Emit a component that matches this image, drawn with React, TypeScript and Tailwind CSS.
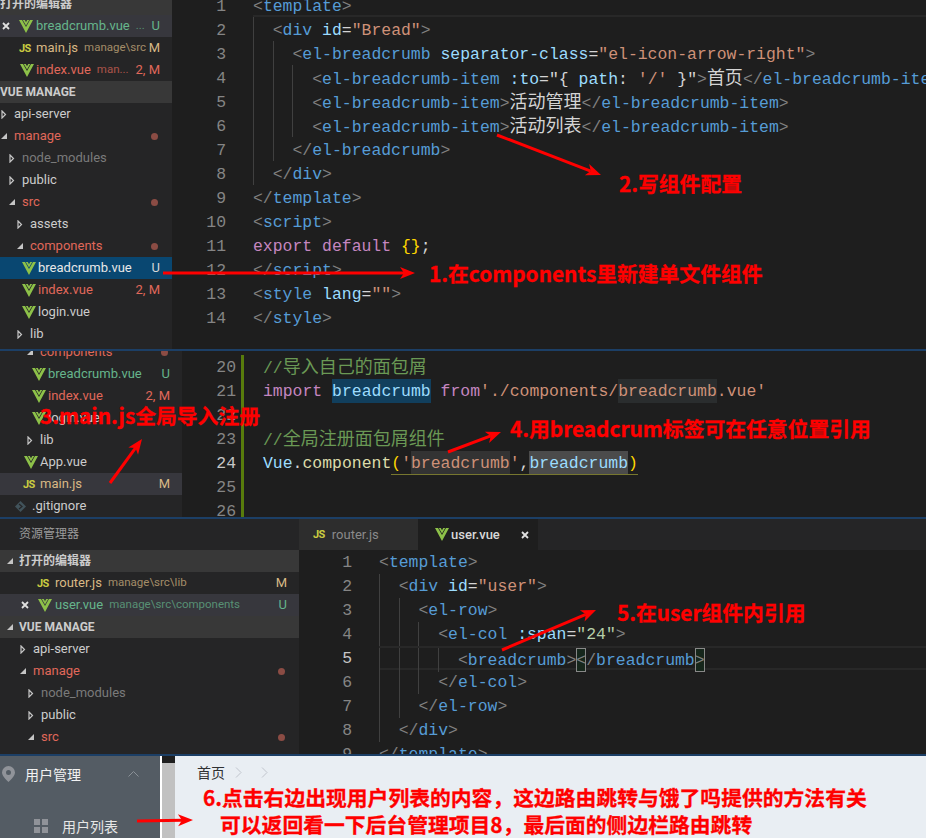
import type { ReactNode } from 'react';

const PUN = 'text-[#808080]';
const TAG = 'text-[#569cd6]';
const ATT = 'text-[#9cdcfe]';
const STR = 'text-[#ce9178]';
const TXT = 'text-[#d4d4d4]';
const CN = 'text-[18px] text-[#d4d4d4]';
const KEY = 'text-[#c586c0]';
const CMT = 'text-[#6a9955]';
const CMTCN = 'text-[18px] text-[#6a9955]';
const GOLD = 'text-[#ffd700]';
const FN = 'text-[#dcdcaa]';
const NUM = 'text-[#b5cea8]';
const UL = 'inline-block h-6 border-b border-[#77772f] ';
const BOX = 'inline-block h-6 bg-[#16261b] ring-1 ring-inset ring-[#888888] ';

type Tok = [string, string];
type Line = { n: number; indent?: number; toks: Tok[]; bright?: boolean; current?: 'bottom' | 'both' };

const open = (name: string): Tok[] => [['<', PUN], [name, TAG], ['>', PUN]];
const close = (name: string): Tok[] => [['</', PUN], [name, TAG], ['>', PUN]];

const templateLines: Line[] = [
  { n: 1, toks: open('template'), current: 'bottom' },
  { n: 2, indent: 1, toks: [['<', PUN], ['div', TAG], [' ', TXT], ['id', ATT], ['=', TXT], ['"Bread"', STR], ['>', PUN]] },
  { n: 3, indent: 2, toks: [['<', PUN], ['el-breadcrumb', TAG], [' ', TXT], ['separator-class', ATT], ['=', TXT], ['"el-icon-arrow-right"', STR], ['>', PUN]] },
  { n: 4, indent: 3, toks: [['<', PUN], ['el-breadcrumb-item', TAG], [' ', TXT], [':to', ATT], ['=', TXT], ['"', TXT], ['{ ', TXT], ['path', ATT], [': ', TXT], ["'/'", STR], [' }', TXT], ['"', TXT], ['>', PUN], ['首页', CN], ...close('el-breadcrumb-item')] },
  { n: 5, indent: 3, toks: [...open('el-breadcrumb-item'), ['活动管理', CN], ...close('el-breadcrumb-item')] },
  { n: 6, indent: 3, toks: [...open('el-breadcrumb-item'), ['活动列表', CN], ...close('el-breadcrumb-item')] },
  { n: 7, indent: 2, toks: close('el-breadcrumb') },
  { n: 8, indent: 1, toks: close('div') },
  { n: 9, toks: close('template') },
  { n: 10, toks: open('script') },
  { n: 11, toks: [['export default', KEY], [' ', TXT], ['{}', GOLD], [';', TXT]] },
  { n: 12, toks: close('script') },
  { n: 13, toks: [['<', PUN], ['style', TAG], [' ', TXT], ['lang', ATT], ['=', TXT], ['""', STR], ['>', PUN]] },
  { n: 14, toks: close('style') },
];

const mainLines: Line[] = [
  { n: 20, toks: [['//', CMT], ['导入自己的面包屑', CMTCN]] },
  {
    n: 21,
    toks: [
      ['import', KEY],
      [' ', TXT],
      ['breadcrumb', 'inline-block h-6 bg-[#113f5d] text-[#9cdcfe]'],
      [' ', TXT],
      ['from', KEY],
      ["'./components/", STR],
      ['breadcrumb', 'inline-block h-6 bg-[#2a2d2e] text-[#ce9178]'],
      [".vue'", STR],
    ],
  },
  { n: 22, toks: [] },
  { n: 23, toks: [['//', CMT], ['全局注册面包屑组件', CMTCN]] },
  {
    n: 24,
    bright: true,
    toks: [
      ['Vue', ATT],
      ['.', TXT],
      ['component', FN],
      ['(', UL + GOLD],
      ["'", UL + STR],
      ['breadcrumb', UL + 'bg-[#333333] ' + STR],
      ["'", UL + STR],
      [',', UL + TXT],
      ['breadcrumb', UL + 'bg-[#4b4b4b] ' + ATT],
      [')', UL + GOLD],
    ],
  },
  { n: 25, toks: [] },
  { n: 26, toks: [] },
];

const userLines: Line[] = [
  { n: 1, toks: open('template') },
  { n: 2, indent: 1, toks: [['<', PUN], ['div', TAG], [' ', TXT], ['id', ATT], ['=', TXT], ['"user"', STR], ['>', PUN]] },
  { n: 3, indent: 2, toks: open('el-row') },
  { n: 4, indent: 3, toks: [['<', PUN], ['el-col', TAG], [' ', TXT], [':span', ATT], ['=', TXT], ['"24"', NUM], ['>', PUN]] },
  {
    n: 5,
    indent: 4,
    bright: true,
    current: 'both',
    toks: [...open('breadcrumb'), ['<', BOX + PUN], ['/', PUN], ['breadcrumb', TAG], ['>', BOX + PUN]],
  },
  { n: 6, indent: 3, toks: close('el-col') },
  { n: 7, indent: 2, toks: close('el-row') },
  { n: 8, indent: 1, toks: close('div') },
  { n: 9, toks: close('template') },
];

function CodeRow({ line }: { line: Line }) {
  const border =
    line.current === 'both'
      ? 'border-y-2 border-[#282828]'
      : line.current === 'bottom'
        ? 'border-b-2 border-[#282828]'
        : '';
  return (
    <div className={`flex h-6 shrink-0 whitespace-pre ${border}`}>
      {Array.from({ length: line.indent ?? 0 }).map((_, i) => (
        <span key={i} className="inline-block h-6 w-[19.74px] shrink-0 border-l border-[#404040]" />
      ))}
      <span className="block">
        {line.toks.map((t, i) => (
          <span key={i} className={t[1]}>
            {t[0]}
          </span>
        ))}
      </span>
    </div>
  );
}

function Editor({ lines, gutter, bar, leading = 'leading-[26px]' }: { lines: Line[]; gutter: string; bar?: boolean; leading?: string }) {
  return (
    <div className={`flex min-w-0 flex-1 [font-family:'Liberation_Mono','Noto_Sans_CJK_SC',monospace] text-[16.45px] ${leading}`}>
      <div className={`${gutter} shrink-0 text-right`}>
        {lines.map((l) => (
          <div key={l.n} className={`h-6 ${l.bright ? 'text-[#c6c6c6]' : 'text-[#858585]'}`}>
            {l.n}
          </div>
        ))}
      </div>
      {bar ? <div className="ml-[5px] w-[3px] shrink-0 bg-[#587c0c]" /> : null}
      <div className={`min-w-0 flex-1 overflow-hidden ${bar ? 'pl-[19px]' : 'pl-[27px]'}`}>
        {lines.map((l) => (
          <CodeRow key={l.n} line={l} />
        ))}
      </div>
    </div>
  );
}

function VueIcon() {
  return (
    <svg width="14" height="13" viewBox="0 0 14 13" className="shrink-0" fill="#8dc149">
      <path d="M0 0h3l4 7 4-7h3L7 13z" />
      <path d="M3.8 0h2L7 2.2 8.2 0h2L7 5.6z" />
    </svg>
  );
}

function JsIcon() {
  return <span className="text-[11px] font-bold leading-none tracking-tighter text-[#cbcb41]">JS</span>;
}

function GitIcon() {
  return (
    <svg width="11" height="11" viewBox="0 0 11 11" className="shrink-0">
      <path d="M5.5 0L11 5.5 5.5 11 0 5.5z" fill="#41535b" />
      <path d="M4 3l3 2.5L4 8" fill="none" stroke="#252526" strokeWidth="1.2" />
    </svg>
  );
}

function CloseX() {
  return (
    <svg width="8" height="8" viewBox="0 0 8 8" className="shrink-0">
      <path d="M1 1l6 6M7 1L1 7" stroke="#e0e0e0" strokeWidth="1.8" />
    </svg>
  );
}

function Twistie({ expanded }: { expanded?: boolean }) {
  return (
    <span className="flex w-[14px] shrink-0 pl-px">
      {expanded ? (
        <svg width="8" height="8" viewBox="0 0 8 8">
          <path d="M6 1v6H0z" fill="#c5c5c5" />
        </svg>
      ) : (
        <svg width="6" height="9" viewBox="0 0 6 9">
          <path d="M1 1l3.5 3.5L1 8z" fill="none" stroke="#c5c5c5" strokeWidth="1.2" />
        </svg>
      )}
    </span>
  );
}

type RowProps = {
  pad: string;
  lead?: ReactNode;
  name: string;
  color?: string;
  desc?: string;
  badge?: string;
  badgeColor?: string;
  dot?: boolean;
  bg?: string;
};

function Row({ pad, lead, name, color = 'text-[#cccccc]', desc, badge, badgeColor, dot, bg = '' }: RowProps) {
  return (
    <div className={`flex h-[22px] shrink-0 items-center whitespace-nowrap pr-3 ${pad} ${bg}`}>
      {lead}
      <span className={`${color} text-[13px]`}>{name}</span>
      {desc ? <span className={`${color} ml-[6px] text-[11.5px] opacity-70`}>{desc}</span> : null}
      <span className="flex-1" />
      {badge ? <span className={`${badgeColor} text-[13px]`}>{badge}</span> : null}
      {dot ? <span className="mr-[2px] h-[7px] w-[7px] rounded-full bg-[#8b4c44]" /> : null}
    </div>
  );
}

function Section({ title, pad = 'pl-0', twist }: { title: string; pad?: string; twist?: boolean }) {
  return (
    <div className={`flex h-[22px] shrink-0 items-center bg-[#383838] text-[12px] font-bold text-[#cccccc] ${pad}`}>
      {twist ? (
        <svg width="6" height="6" viewBox="0 0 6 6" className="mr-[6px]">
          <path d="M6 0v6H0z" fill="#c5c5c5" />
        </svg>
      ) : null}
      {title}
    </div>
  );
}

const GREEN = 'text-[#66b58c]';
const RED = 'text-[#e0685a]';
const TAN = 'text-[#d9b985]';
const GRAY = 'text-[#7a7a7a]';

const vueLead = (w: string) => (
  <span className={`flex shrink-0 ${w}`}>
    <VueIcon />
  </span>
);
const jsLead = (w: string) => (
  <span className={`flex shrink-0 ${w}`}>
    <JsIcon />
  </span>
);

function Sidebar({ width, children }: { width: string; children: ReactNode }) {
  return (
    <div className={`${width} flex shrink-0 flex-col overflow-hidden bg-[#252526] [font-family:'Roboto','Noto_Sans_CJK_SC',sans-serif]`}>
      {children}
    </div>
  );
}

function TopPanel() {
  return (
    <section className="flex h-[349px] shrink-0 overflow-hidden bg-[#1e1e1e]">
      <Sidebar width="w-[172px]">
        <div className="-mt-[7px] flex flex-col">
          <Section title="打开的编辑器" />
          <Row
            pad="pl-[2px]"
            bg="bg-[#37373d]"
            lead={
              <span className="flex w-[34px] shrink-0 items-center gap-[9px]">
                <CloseX />
                <VueIcon />
              </span>
            }
            name="breadcrumb.vue"
            color={GREEN}
            desc="..."
            badge="U"
            badgeColor={GREEN}
          />
          <Row pad="pl-[19px]" lead={jsLead('w-[17px]')} name="main.js" color={TAN} desc="manage\src" badge="M" badgeColor={TAN} />
          <Row pad="pl-5" lead={vueLead('w-4')} name="index.vue" color={RED} desc="man..." badge="2, M" badgeColor={RED} />
          <Section title="VUE MANAGE" />
          <Row pad="pl-0" lead={<Twistie />} name="api-server" />
          <Row pad="pl-0" lead={<Twistie expanded />} name="manage" color={RED} dot />
          <Row pad="pl-2" lead={<Twistie />} name="node_modules" color={GRAY} />
          <Row pad="pl-2" lead={<Twistie />} name="public" />
          <Row pad="pl-2" lead={<Twistie expanded />} name="src" color={RED} dot />
          <Row pad="pl-4" lead={<Twistie />} name="assets" />
          <Row pad="pl-4" lead={<Twistie expanded />} name="components" color={RED} dot />
          <Row pad="pl-[22px]" lead={vueLead('w-4')} name="breadcrumb.vue" color="text-[#e8e8e8]" badge="U" badgeColor="text-[#d8d8d8]" bg="bg-[#094771]" />
          <Row pad="pl-[22px]" lead={vueLead('w-4')} name="index.vue" color={RED} badge="2, M" badgeColor={RED} />
          <Row pad="pl-[22px]" lead={vueLead('w-4')} name="login.vue" />
          <Row pad="pl-4" lead={<Twistie />} name="lib" />
        </div>
      </Sidebar>
      <div className="-mt-[7px] flex min-w-0 flex-1">
        <Editor lines={templateLines} gutter="w-[54px]" leading="leading-[28px]" />
      </div>
    </section>
  );
}

function MainPanel() {
  return (
    <section className="flex h-[166px] shrink-0 overflow-hidden bg-[#1e1e1e]">
      <Sidebar width="w-[182px]">
        <div className="-mt-[10px] flex flex-col">
          <Row pad="pl-[26px]" lead={<Twistie expanded />} name="components" color={RED} dot />
          <Row pad="pl-8" lead={vueLead('w-4')} name="breadcrumb.vue" color={GREEN} badge="U" badgeColor={GREEN} />
          <Row pad="pl-8" lead={vueLead('w-4')} name="index.vue" color={RED} badge="2, M" badgeColor={RED} />
          <Row pad="pl-8" lead={vueLead('w-4')} name="login.vue" />
          <Row pad="pl-[26px]" lead={<Twistie />} name="lib" />
          <Row pad="pl-6" lead={vueLead('w-4')} name="App.vue" />
          <Row pad="pl-[23px]" lead={jsLead('w-[17px]')} name="main.js" color={TAN} badge="M" badgeColor={TAN} bg="bg-[#37373d]" />
          <Row
            pad="pl-[15px]"
            lead={
              <span className="flex w-[17px] shrink-0">
                <GitIcon />
              </span>
            }
            name=".gitignore"
          />
        </div>
      </Sidebar>
      <div className="flex min-w-0 flex-1 pt-1">
        <Editor lines={mainLines} gutter="w-[54px]" bar />
      </div>
    </section>
  );
}

function UserPanel() {
  return (
    <section className="flex h-[235px] shrink-0 overflow-hidden bg-[#1e1e1e]">
      <Sidebar width="w-[299px]">
        <div className="flex h-[29px] shrink-0 items-center pl-[19px] text-[12px] text-[#9b9b9b]">资源管理器</div>
        <div className="h-[2px] shrink-0" />
        <Section title="打开的编辑器" pad="pl-[7px]" twist />
        <Row pad="pl-[37px]" lead={jsLead('w-[18px]')} name="router.js" color={TAN} desc="manage\src\lib" badge="M" badgeColor={TAN} />
        <Row
          pad="pl-[21px]"
          bg="bg-[#37373d]"
          lead={
            <span className="flex w-[34px] shrink-0 items-center gap-[9px]">
              <CloseX />
              <VueIcon />
            </span>
          }
          name="user.vue"
          color={GREEN}
          desc="manage\src\components"
          badge="U"
          badgeColor={GREEN}
        />
        <Section title="VUE MANAGE" pad="pl-[7px]" twist />
        <Row pad="pl-[19px]" lead={<Twistie />} name="api-server" />
        <Row pad="pl-[19px]" lead={<Twistie expanded />} name="manage" color={RED} dot />
        <Row pad="pl-[27px]" lead={<Twistie />} name="node_modules" color={GRAY} />
        <Row pad="pl-[27px]" lead={<Twistie />} name="public" />
        <Row pad="pl-[27px]" lead={<Twistie expanded />} name="src" color={RED} dot />
      </Sidebar>
      <div className="flex min-w-0 flex-1 flex-col">
        <div className="flex h-[31px] shrink-0 bg-[#252526] [font-family:'Roboto','Noto_Sans_CJK_SC',sans-serif] text-[13px]">
          <div className="flex w-[119px] items-center bg-[#2d2d2d] pl-[14px] text-[#8a8a8a]">
            <span className="mr-[7px] flex">
              <JsIcon />
            </span>
            router.js
          </div>
          <div className="flex w-[120px] items-center bg-[#1e1e1e] pl-[17px] font-medium text-[#d8d8d8]">
            <span className="mr-[2px] flex">
              <VueIcon />
            </span>
            user.vue
            <span className="ml-auto mr-[9px] flex">
              <CloseX />
            </span>
          </div>
        </div>
        <Editor lines={userLines} gutter="w-[53px]" />
      </div>
    </section>
  );
}

function AdminPanel() {
  return (
    <section className="flex h-[82px] shrink-0 overflow-hidden [font-family:'Noto_Sans_CJK_SC',sans-serif] text-[14px]">
      <div className="w-[162px] shrink-0 border-r-2 border-white bg-[#545c64]">
        <div className="flex h-9 items-center pl-[2px] text-[#f2f2f2]">
          <svg width="13" height="16" viewBox="0 0 13 16" fill="#909399" className="mr-[10px]">
            <path d="M6.5 0A6.5 6.5 0 0 0 0 6.5C0 10.5 6.5 16 6.5 16S13 10.5 13 6.5A6.5 6.5 0 0 0 6.5 0zm0 9a2.5 2.5 0 1 1 0-5 2.5 2.5 0 0 1 0 5z" />
          </svg>
          用户管理
          <svg width="11" height="6" viewBox="0 0 11 6" className="ml-[47px]">
            <path d="M.5 5.5l5-5 5 5" fill="none" stroke="#8a9096" />
          </svg>
        </div>
        <div className="mt-[15px] flex h-[38px] items-center pl-[34px] text-[#e6e6e6]">
          <svg width="14" height="14" viewBox="0 0 14 14" fill="#909399" className="mr-[14px]">
            <rect width="6" height="6" />
            <rect x="8" width="6" height="6" />
            <rect y="8" width="6" height="6" />
            <rect x="8" y="8" width="6" height="6" />
          </svg>
          用户列表
        </div>
      </div>
      <div className="mt-[7px] w-[13px] shrink-0 bg-[#c1c1c1]" />
      <div className="flex-1 bg-[#e9eef3] pl-[22px]">
        <div className="flex h-8 items-center text-[#303133]">
          首页
          <svg width="7" height="11" viewBox="0 0 7 11" className="ml-[10px]">
            <path d="M1 .5l5 5-5 5" fill="none" stroke="#c0c4cc" />
          </svg>
          <svg width="7" height="11" viewBox="0 0 7 11" className="ml-[19px]">
            <path d="M1 .5l5 5-5 5" fill="none" stroke="#c0c4cc" />
          </svg>
        </div>
      </div>
    </section>
  );
}

function Divider() {
  return <div className="h-[2px] shrink-0 bg-[#1c3f66]" />;
}

function Arrow({ x1, y1, x2, y2 }: { x1: number; y1: number; x2: number; y2: number }) {
  const len = Math.hypot(x2 - x1, y2 - y1);
  const ux = (x2 - x1) / len;
  const uy = (y2 - y1) / len;
  const bx = x2 - ux * 15;
  const by = y2 - uy * 15;
  const nx = x2 - ux * 11;
  const ny = y2 - uy * 11;
  const head = `${x2},${y2} ${bx - uy * 6},${by + ux * 6} ${nx},${ny} ${bx + uy * 6},${by - ux * 6}`;
  return (
    <g>
      <line x1={x1} y1={y1} x2={nx} y2={ny} stroke="#ff0000" strokeWidth="3" />
      <polygon points={head} fill="#ff0000" />
    </g>
  );
}

const NOTE = "absolute whitespace-nowrap [font-family:'Noto_Sans_CJK_SC',sans-serif] text-[20.8px] font-bold leading-7 text-[#ff0000] [-webkit-text-stroke:0.3px_#ff0000]";

export default function App() {
  return (
    <div className="relative flex h-[838px] w-[926px] flex-col overflow-hidden bg-[#1e1e1e]">
      <TopPanel />
      <Divider />
      <MainPanel />
      <Divider />
      <UserPanel />
      <Divider />
      <AdminPanel />

      <svg width="926" height="838" viewBox="0 0 926 838" className="pointer-events-none absolute left-0 top-0">
        <Arrow x1={163} y1={273} x2={415} y2={273} />
        <Arrow x1={497} y1={135} x2={601} y2={175} />
        <Arrow x1={110} y1={483} x2={142} y2={439} />
        <Arrow x1={448} y1={452} x2={501} y2={432} />
        <Arrow x1={502} y1={650} x2={596} y2={610} />
        <Arrow x1={137} y1={821} x2={193} y2={820} />
      </svg>

      <span className={`${NOTE} left-[429px] top-[259px]`}>1.在components里新建单文件组件</span>
      <span className={`${NOTE} left-[619px] top-[169px]`}>2.写组件配置</span>
      <span className={`${NOTE} left-[40px] top-[401px]`}>3.main.js全局导入注册</span>
      <span className={`${NOTE} left-[510px] top-[414px]`}>4.用breadcrum标签可在任意位置引用</span>
      <span className={`${NOTE} left-[617px] top-[598px]`}>5.在user组件内引用</span>
      <span className={`${NOTE} left-[203px] top-[783px]`}>6.点击右边出现用户列表的内容，这边路由跳转与饿了吗提供的方法有关</span>
      <span className={`${NOTE} left-[220px] top-[810px]`}>可以返回看一下后台管理项目8，最后面的侧边栏路由跳转</span>
    </div>
  );
}
